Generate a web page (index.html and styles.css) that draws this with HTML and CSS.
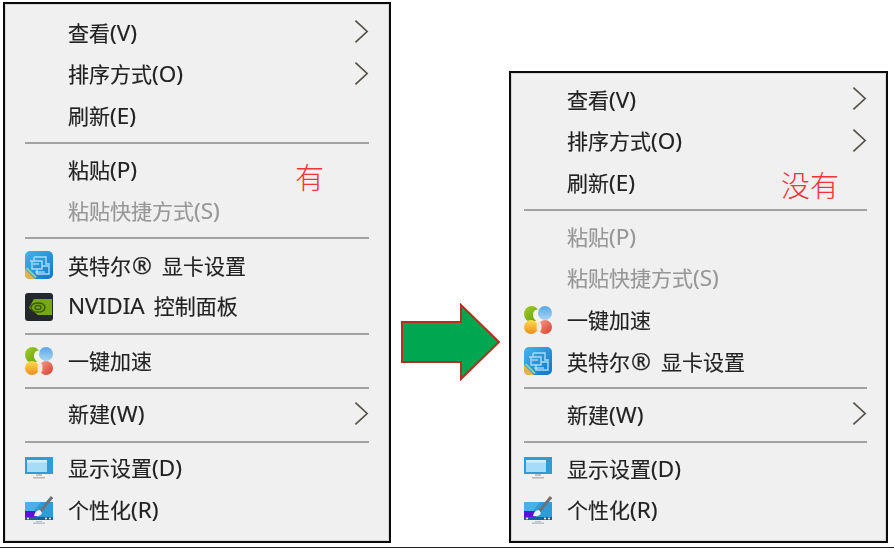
FILE: index.html
```html
<!DOCTYPE html>
<html lang="zh-CN">
<head>
<meta charset="utf-8">
<title>右键菜单对比</title>
<link rel="stylesheet" href="styles.css">
</head>
<body>
<svg class="defs" width="0" height="0" aria-hidden="true">
  <defs>
    <linearGradient id="gBlue" x1="0" y1="0" x2="1" y2="1"><stop offset="0" stop-color="#45b4ea"/><stop offset="1" stop-color="#1175c8"/></linearGradient>
    <linearGradient id="gOrange" x1="0" y1="0" x2="0" y2="1"><stop offset="0" stop-color="#ffdc4e"/><stop offset="1" stop-color="#ee8c1a"/></linearGradient>
    <linearGradient id="gRed" x1="0" y1="0" x2="1" y2="1"><stop offset="0" stop-color="#f4a28e"/><stop offset="1" stop-color="#d93a2c"/></linearGradient>
    <linearGradient id="gSky" x1="0" y1="0" x2="0" y2="1"><stop offset="0" stop-color="#5aa7e6"/><stop offset="1" stop-color="#a9d4f4"/></linearGradient>
    <linearGradient id="gLeaf" x1="0" y1="0" x2="1" y2="1"><stop offset="0" stop-color="#a3cf28"/><stop offset="1" stop-color="#5f9e08"/></linearGradient>
    <symbol id="chev" viewBox="0 0 16 26"><path d="M1.5 1.5 L14 13 L1.5 24.5" fill="none" stroke="#55514a" stroke-width="1.8"/></symbol>
    <symbol id="intel" viewBox="0 0 28 28">
      <rect x="0" y="0" width="28" height="28" rx="5" fill="url(#gBlue)"/>
      <path d="M0 18 L10 28 H5 Q0 28 0 23Z" fill="#e9b04a"/>
      <path d="M1.500 17 L11 26.500" stroke="#8fd0a0" stroke-width="2" fill="none"/>
      <path d="M9 6 H21 V13 H25 M9 6 V10 M5 10 H17 V18 H7 V10 M12 18 V23 H24 V15 H17" fill="none" stroke="#a8dcf6" stroke-width="1.4"/>
      <path d="M8 13 H14 M10 21 H20" stroke="#d7f0fc" stroke-width="1.2"/>
    </symbol>
    <symbol id="nvidia" viewBox="0 0 28 28">
      <rect x="0" y="0" width="28" height="28" rx="3" fill="#23282c"/>
      <path d="M9 6 H27 V22 H13 L4 15 Q7 9 9 6Z" fill="#76a811"/>
      <ellipse cx="13" cy="14.500" rx="7" ry="4.600" fill="none" stroke="#3a5a12" stroke-width="1.500"/>
      <ellipse cx="13" cy="14.500" rx="3" ry="2" fill="none" stroke="#3a5a12" stroke-width="1.300"/>
    </symbol>
    <symbol id="speed" viewBox="0 0 28 28">
      <rect x="6" y="6" width="16" height="16" fill="#f6f2e4"/>
      <ellipse cx="7.500" cy="8" rx="7.500" ry="8" fill="url(#gLeaf)"/>
      <ellipse cx="13" cy="9" rx="4" ry="5.500" fill="#f3f5e8"/>
      <ellipse cx="21" cy="7" rx="7" ry="7" fill="url(#gSky)"/>
      <ellipse cx="7" cy="21" rx="7" ry="7" fill="url(#gOrange)"/>
      <ellipse cx="21" cy="21" rx="7" ry="7" fill="url(#gRed)"/>
      <ellipse cx="15" cy="21" rx="2.500" ry="5" fill="#f6e6dc"/>
    </symbol>
    <symbol id="display" viewBox="0 0 28 22">
      <rect x="0" y="0" width="28" height="17" fill="#2f9bd9"/>
      <rect x="2" y="3" width="20" height="12" fill="#a6dcf7"/>
      <rect x="2" y="3" width="20" height="2.500" fill="#d5eefb"/>
      <rect x="11" y="17" width="6" height="2" fill="#b9c4cc"/>
      <rect x="8" y="20" width="12" height="1.500" fill="#aeb9c2"/>
    </symbol>
    <symbol id="person" viewBox="0 0 28 28">
      <rect x="0" y="6" width="28" height="18" fill="#2f9bd9"/>
      <path d="M0 6 H16 L8 16 H0Z" fill="#4cb0e6"/>
      <rect x="0" y="15" width="12" height="8" fill="#5a12d8"/>
      <rect x="0" y="21" width="28" height="3" fill="#1a5f96"/>
      <circle cx="3" cy="22.500" r="1" fill="#fff"/><circle cx="21" cy="22.500" r="1" fill="#fff"/><circle cx="25" cy="22.500" r="1" fill="#fff"/>
      <path d="M14 17 L27 1" stroke="#6d7278" stroke-width="3" fill="none"/>
      <path d="M9 20 Q10 14 15 14 L17 17 Q15 21 9 20Z" fill="#eef3f7"/>
      <rect x="11" y="25" width="6" height="1.200" fill="#b9c4cc"/>
      <rect x="8" y="26.500" width="12" height="1.300" fill="#aeb9c2"/>
    </symbol>
  </defs>
</svg>

<main class="stage">
  <section class="menu menu-left">
    <div class="row"><span class="label">查看<b class="lat">(V)</b></span><svg class="chev"><use href="#chev"/></svg></div>
    <div class="row"><span class="label">排序方式<b class="lat">(O)</b></span><svg class="chev"><use href="#chev"/></svg></div>
    <div class="row"><span class="label">刷新<b class="lat">(E)</b></span></div>
    <div class="sep"></div>
    <div class="row"><span class="label">粘贴<b class="lat">(P)</b></span></div>
    <div class="row off"><span class="label">粘贴快捷方式<b class="lat">(S)</b></span></div>
    <div class="sep"></div>
    <div class="row"><svg class="ico"><use href="#intel"/></svg><span class="label">英特尔<b class="reg">®</b>显卡设置</span></div>
    <div class="row"><svg class="ico"><use href="#nvidia"/></svg><span class="label"><b class="lat brand">NVIDIA</b>控制面板</span></div>
    <div class="sep"></div>
    <div class="row"><svg class="ico"><use href="#speed"/></svg><span class="label">一键加速</span></div>
    <div class="sep"></div>
    <div class="row"><span class="label">新建<b class="lat">(W)</b></span><svg class="chev"><use href="#chev"/></svg></div>
    <div class="sep"></div>
    <div class="row"><svg class="ico ico-d"><use href="#display"/></svg><span class="label">显示设置<b class="lat">(D)</b></span></div>
    <div class="row"><svg class="ico"><use href="#person"/></svg><span class="label">个性化<b class="lat">(R)</b></span></div>
    <span class="note note-has">有</span>
  </section>

  <svg class="arrow" viewBox="0 0 100 78" aria-hidden="true">
    <path d="M1 19 H60 V2 L98 39 L60 76 V59 H1Z" fill="#00a650" stroke="#b5301c" stroke-width="2"/>
  </svg>

  <section class="menu menu-right">
    <div class="row"><span class="label">查看<b class="lat">(V)</b></span><svg class="chev"><use href="#chev"/></svg></div>
    <div class="row"><span class="label">排序方式<b class="lat">(O)</b></span><svg class="chev"><use href="#chev"/></svg></div>
    <div class="row"><span class="label">刷新<b class="lat">(E)</b></span></div>
    <div class="sep"></div>
    <div class="row off"><span class="label">粘贴<b class="lat">(P)</b></span></div>
    <div class="row off"><span class="label">粘贴快捷方式<b class="lat">(S)</b></span></div>
    <div class="row"><svg class="ico"><use href="#speed"/></svg><span class="label">一键加速</span></div>
    <div class="row"><svg class="ico"><use href="#intel"/></svg><span class="label">英特尔<b class="reg">®</b>显卡设置</span></div>
    <div class="sep"></div>
    <div class="row"><span class="label">新建<b class="lat">(W)</b></span><svg class="chev"><use href="#chev"/></svg></div>
    <div class="sep"></div>
    <div class="row"><svg class="ico ico-d"><use href="#display"/></svg><span class="label">显示设置<b class="lat">(D)</b></span></div>
    <div class="row"><svg class="ico"><use href="#person"/></svg><span class="label">个性化<b class="lat">(R)</b></span></div>
    <span class="note note-none">没有</span>
  </section>
</main>
</body>
</html>
```

FILE: styles.css
```css
* { box-sizing: border-box; }
html, body { margin: 0; padding: 0; background: #fff; }
body { width: 894px; height: 548px; overflow: hidden; }
.defs { position: absolute; }

.stage {
  display: flex;
  align-items: flex-start;
  width: 894px;
  height: 548px;
  padding: 2px 0 0 3px;
  border-bottom: 1px solid #222;
}

.menu {
  position: relative;
  flex: none;
  display: flex;
  flex-direction: column;
  background: #f0f0f0;
  border: 2px solid #0a0a0a;
  box-shadow: inset 0 0 0 1px #d8d8d8;
  font-family: "Noto Sans CJK SC", "Noto Sans", sans-serif;
  font-size: 21px;
  color: #222;
}
.menu-left { width: 388px; height: 541px; padding: 8.5px 20px 0 20px; }
.menu-right { width: 379px; height: 472px; margin-top: 69px; padding: 6.5px 19px 0 13px; }

.row {
  flex: none;
  display: flex;
  align-items: center;
  height: 41.4px;
  padding-left: 43px;
  position: relative;
}
.label { filter: blur(0.4px); white-space: nowrap; line-height: 1; -webkit-text-stroke: 0.15px currentColor; }
.off { color: #979797; }

.lat, .reg {
  font-family: "Noto Sans", sans-serif;
  font-weight: 400;
  font-size: 22.5px;
}
.brand { margin-right: 9px; }
.reg { font-size: 24px; margin: 0 10px 0 1px; }

.ico {
  position: absolute;
  left: 0;
  top: 6.5px;
  width: 28px;
  height: 28px;
  filter: blur(0.4px);
}
.ico-d { top: 9px; height: 22px; }

.chev {
  width: 15px;
  height: 25px;
  margin-left: auto;
  margin-top: -3px;
  filter: blur(0.25px);
}

.sep {
  flex: none;
  height: 12.6px;
  display: flex;
  align-items: center;
}
.sep::before {
  content: "";
  display: block;
  width: 100%;
  height: 2px;
  background: #a2a2a2;
}

.arrow {
  flex: none;
  width: 100px;
  height: 78px;
  margin: 301px 8px 0 10px;
}

.note {
  position: absolute;
  font-family: "Noto Sans CJK SC", sans-serif;
  font-size: 29px;
  font-weight: 300;
  line-height: 1;
  color: #f5333a;
  white-space: nowrap;
}
.note-has { left: 290px; top: 158px; }
.note-none { left: 270px; top: 97px; }
```
